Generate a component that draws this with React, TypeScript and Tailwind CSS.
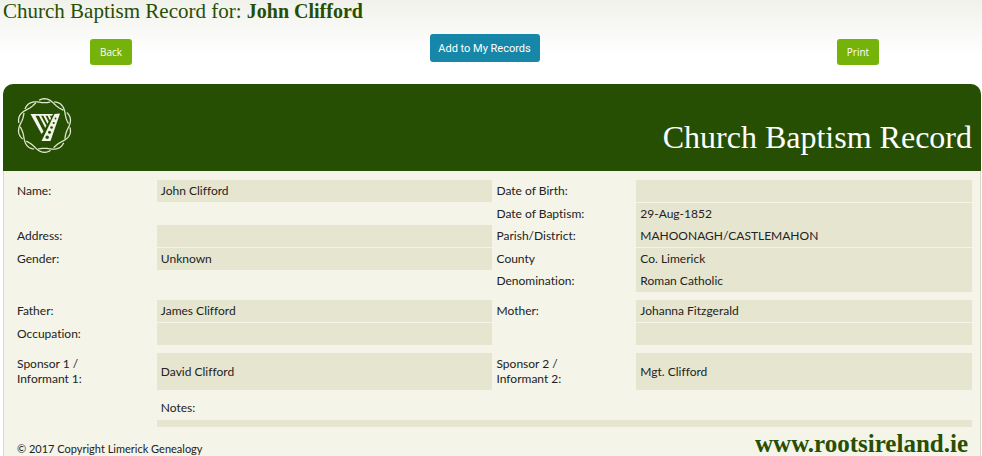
import React from "react";

type Row = { label?: string; value?: string; label2?: string; value2?: string; leftBox?: boolean; line?: boolean };

const groups: Row[][] = [
  [
    { label: "Name:", value: "John Clifford", leftBox: true, label2: "Date of Birth:", line: true },
    { label2: "Date of Baptism:", value2: "29-Aug-1852" },
    { label: "Address:", leftBox: true, label2: "Parish/District:", value2: "MAHOONAGH/CASTLEMAHON", line: true },
    { label: "Gender:", value: "Unknown", leftBox: true, label2: "County", value2: "Co. Limerick" },
    { label2: "Denomination:", value2: "Roman Catholic" },
  ],
  [
    { label: "Father:", value: "James Clifford", leftBox: true, label2: "Mother:", value2: "Johanna Fitzgerald", line: true },
    { label: "Occupation:", leftBox: true },
  ],
];

function wave(phase: number) {
  const pts: string[] = [];
  for (let i = 0; i <= 240; i++) {
    const t = (i / 240) * Math.PI * 2;
    const r = 24.8 + 2 * Math.sin(5 * t + phase);
    pts.push(`${(28.5 + r * Math.cos(t)).toFixed(2)},${(28.5 + r * Math.sin(t)).toFixed(2)}`);
  }
  return pts.join(" ");
}

function Harp() {
  return (
    <svg width="57" height="57" viewBox="0 0 57 57" role="img" aria-label="Harp emblem">
      <g fill="none" stroke="#dfe8cb" strokeWidth="1.3">
        <polyline points={wave(0)} pathLength={100} strokeDasharray="17.5 2.5" strokeDashoffset="-1.25" />
        <polyline points={wave(Math.PI)} pathLength={100} strokeDasharray="17.5 2.5" strokeDashoffset="8.75" />
      </g>
      <g fill="#f4f4e8">
        <path d="M14.500 17H37L36 18.800H19.500L27.500 34.500L25.500 37Z" />
        <path d="M22.500 18H24.700L30.300 28.500L29.300 31Z" />
        <path d="M27 18H29.200L32.500 24.500L31.500 27Z" />
        <path d="M31.300 18H33.300L35 21L34 23.500Z" />
        <path d="M38.500 17L44 16.500L34.500 44H25.500L27.500 40Z" />
      </g>
      <g fill="#264f04">
        <circle cx="39.500" cy="21.500" r="0.9" />
        <circle cx="37.700" cy="26" r="1.1" />
        <circle cx="35.600" cy="30.500" r="1.3" />
        <circle cx="33.500" cy="35.300" r="1.5" />
        <circle cx="31.200" cy="40.300" r="1.7" />
      </g>
    </svg>
  );
}

const cell = "px-1 pb-0.5";
const th = `${cell} text-left font-normal`;

function DataRow({ row }: { row: Row }) {
  const line = row.line ? "border-b border-[#f4f4e8]" : "";
  return (
    <tr className={row.line ? "h-[23px]" : "h-[22px]"}>
      <th scope="row" className={`${th} ${line}`}>{row.label}</th>
      <td className={`${cell} ${line} ${row.leftBox ? "bg-[#e6e6d0]" : ""}`}>{row.value}</td>
      <th scope="row" className={`${th} ${line}`}>{row.label2}</th>
      <td className={`${cell} ${line} bg-[#e6e6d0]`}>{row.value2}</td>
    </tr>
  );
}

export default function App() {
  return (
    <main className="bg-linear-to-b from-[#f1f1ec] to-white to-[56px] pr-px pl-[3px] font-['Lato',sans-serif] text-[12px] leading-[15px] text-[#222] [font-variant-ligatures:none]">
      <h1 className="h-[22px] font-['Liberation_Serif',serif] text-[21px] leading-[22px] text-[#264f04]">
        Church Baptism Record for: <strong className="text-[20px]">John Clifford</strong>
      </h1>
      <div className="flex h-[62px] items-start justify-between pt-3 pr-[102px] pl-[87px] font-['Open_Sans',sans-serif] text-white">
        <button type="button" className="mt-[5px] h-[26px] w-[42px] rounded-[3px] bg-[#75b30a] text-[10px]">Back</button>
        <button type="button" className="h-7 w-[110px] rounded-[3px] bg-[#1787a9] font-['Roboto',sans-serif] text-[11px]">Add to My Records</button>
        <button type="button" className="mt-[5px] h-[26px] w-[42px] rounded-[3px] bg-[#75b30a] text-[10px]">Print</button>
      </div>
      <section>
        <header className="flex h-[87px] items-start justify-between rounded-t-[10px] bg-[#264f04] pt-[13px] pr-[9px] pl-[13px]">
          <Harp />
          <h2 className="pt-5 font-['Liberation_Serif',serif] text-[32px] leading-[40px] text-white">Church Baptism Record</h2>
        </header>
        <div className="border-x border-[#d9d9cc] bg-[#f4f4e8] pt-[9px] pr-2 pl-[9px]">
          <table className="w-full table-fixed border-separate border-spacing-0">
            <colgroup>
              <col className="w-[15%]" /><col className="w-[35%]" /><col className="w-[15%]" /><col className="w-[35%]" />
            </colgroup>
            {groups.map((rows, i) => (
              <tbody key={i}>
                {rows.map((row, j) => <DataRow key={j} row={row} />)}
                <tr className="h-2"><td colSpan={4} /></tr>
              </tbody>
            ))}
            <tbody>
              <tr className="h-[37px]">
                <th scope="row" className={th}>Sponsor 1 /<br />Informant 1:</th>
                <td className="bg-[#e6e6d0] px-1">David Clifford</td>
                <th scope="row" className={th}>Sponsor 2 /<br />Informant 2:</th>
                <td className="bg-[#e6e6d0] px-1">Mgt. Clifford</td>
              </tr>
              <tr className="h-[30px]">
                <td />
                <th scope="row" colSpan={3} className="px-1 pt-1 text-left font-normal">Notes:</th>
              </tr>
              <tr className="h-[7px]">
                <td />
                <td colSpan={3} className="bg-[#e6e6d0]" />
              </tr>
            </tbody>
          </table>
          <footer className="flex h-[29px] items-end justify-between pr-1 pl-1">
            <small className="text-[11px] leading-[15px]">© 2017 Copyright Limerick Genealogy</small>
            <a href="#" className="font-['Liberation_Serif',serif] text-[25px] leading-[25px] font-bold text-[#264f04]">www.rootsireland.ie</a>
          </footer>
        </div>
      </section>
    </main>
  );
}
